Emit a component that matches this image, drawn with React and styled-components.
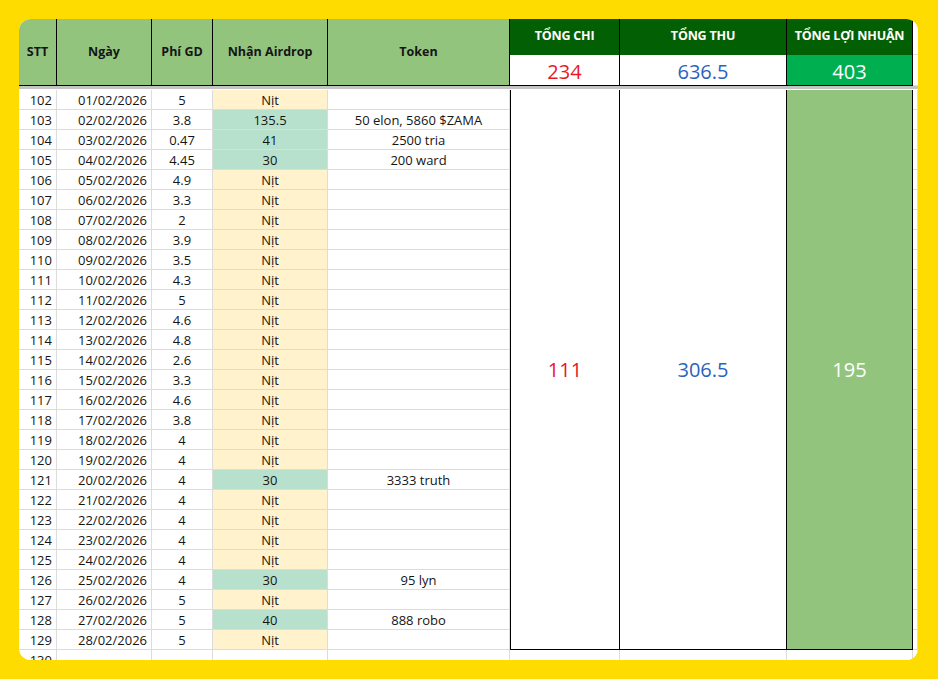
import React from "react";
import styled, { createGlobalStyle, css } from "styled-components";

const GlobalStyle = createGlobalStyle`
  html, body {
    margin: 0;
    padding: 0;
    background: #ffdc00;
  }
  body {
    font-family: "Open Sans", "Liberation Sans", sans-serif;
  }
`;

const Page = styled.div`
  width: 938px;
  height: 679px;
  padding: 19px 20px 19px 19px;
  box-sizing: border-box;
  background: #ffdc00;
`;

const Panel = styled.div`
  height: 641px;
  background: #fff;
  border-radius: 12px;
  overflow: hidden;
`;

const Sheet = styled.div`
  display: grid;
  grid-template-columns: 38px 95px 61px 115px 182px 110px 167px 126px 5px;
  grid-template-rows: 36px 31px 4px repeat(29, 20px);
  font-size: 13px;
  color: #151515;
`;

const HeadCell = styled.div`
  grid-row: span 2;
  display: flex;
  align-items: center;
  justify-content: center;
  padding-bottom: 2px;
  background: #93c47d;
  font-weight: 700;
  font-size: 12.5px;
  border-right: 1px solid #000;
  border-bottom: 1px solid #000;
  box-sizing: border-box;
`;

const TotalHead = styled.div`
  display: flex;
  align-items: center;
  justify-content: center;
  padding-bottom: 4px;
  background: #035f04;
  color: #fff;
  font-weight: 700;
  font-size: 12.5px;
  letter-spacing: -0.2px;
  border-right: 1px solid #000;
  box-sizing: border-box;
`;

const TotalValue = styled.div`
  display: flex;
  align-items: center;
  justify-content: center;
  background: ${(p) => p.$bg || "#fff"};
  color: ${(p) => p.$color};
  font-size: 20px;
  padding-top: 2px;
  border-right: 1px solid #000;
  border-bottom: 1px solid #000;
  box-sizing: border-box;
`;

const Filler = styled.div`
  background: #fff;
  border-bottom: 1px solid #e2e2e2;
  box-sizing: border-box;
`;

const Band = styled.div`
  grid-column: 1 / -1;
  background: #c4c4c4;
  border-bottom: 1px solid #fff;
`;

const Cell = styled.div`
  display: flex;
  align-items: center;
  justify-content: ${(p) => p.$align || "center"};
  padding: 0 ${(p) => (p.$align === "flex-end" ? "4px" : "0")};
  background: ${(p) => p.$bg || "#fff"};
  border-right: 1px solid #dcdcdc;
  border-bottom: 1px solid #dcdcdc;
  box-sizing: border-box;
  white-space: nowrap;
  overflow: hidden;
`;

const Merged = styled.div`
  grid-row: 4 / span 28;
  grid-column: ${(p) => p.$col};
  display: flex;
  align-items: center;
  justify-content: center;
  background: ${(p) => p.$bg || "#fff"};
  color: ${(p) => p.$color};
  font-size: 20px;
  border-right: 1px solid #000;
  border-bottom: 1px solid #000;
  ${(p) => p.$first && css`border-left: 1px solid #000;`}
  box-sizing: border-box;
`;

const NIT = "Nịt";

const rows = [
  [102, "01/02/2026", "5", NIT, ""],
  [103, "02/02/2026", "3.8", "135.5", "50 elon, 5860 $ZAMA"],
  [104, "03/02/2026", "0.47", "41", "2500 tria"],
  [105, "04/02/2026", "4.45", "30", "200 ward"],
  [106, "05/02/2026", "4.9", NIT, ""],
  [107, "06/02/2026", "3.3", NIT, ""],
  [108, "07/02/2026", "2", NIT, ""],
  [109, "08/02/2026", "3.9", NIT, ""],
  [110, "09/02/2026", "3.5", NIT, ""],
  [111, "10/02/2026", "4.3", NIT, ""],
  [112, "11/02/2026", "5", NIT, ""],
  [113, "12/02/2026", "4.6", NIT, ""],
  [114, "13/02/2026", "4.8", NIT, ""],
  [115, "14/02/2026", "2.6", NIT, ""],
  [116, "15/02/2026", "3.3", NIT, ""],
  [117, "16/02/2026", "4.6", NIT, ""],
  [118, "17/02/2026", "3.8", NIT, ""],
  [119, "18/02/2026", "4", NIT, ""],
  [120, "19/02/2026", "4", NIT, ""],
  [121, "20/02/2026", "4", "30", "3333 truth"],
  [122, "21/02/2026", "4", NIT, ""],
  [123, "22/02/2026", "4", NIT, ""],
  [124, "23/02/2026", "4", NIT, ""],
  [125, "24/02/2026", "4", NIT, ""],
  [126, "25/02/2026", "4", "30", "95 lyn"],
  [127, "26/02/2026", "5", NIT, ""],
  [128, "27/02/2026", "5", "40", "888 robo"],
  [129, "28/02/2026", "5", NIT, ""],
];

const App = () => {
  return (
    <>
      <GlobalStyle />
      <Page>
        <Panel>
          <Sheet>
            <HeadCell>STT</HeadCell>
            <HeadCell>Ngày</HeadCell>
            <HeadCell>Phí GD</HeadCell>
            <HeadCell>Nhận Airdrop</HeadCell>
            <HeadCell>Token</HeadCell>
            <TotalHead>TỔNG CHI</TotalHead>
            <TotalHead>TỔNG THU</TotalHead>
            <TotalHead>TỔNG LỢI NHUẬN</TotalHead>
            <Filler />
            <TotalValue $color="#e8191f">234</TotalValue>
            <TotalValue $color="#2a63bd">636.5</TotalValue>
            <TotalValue $bg="#00b050" $color="#fff">
              403
            </TotalValue>
            <Filler />
            <Band />

            <Merged $col={6} $first $color="#e8191f">
              111
            </Merged>
            <Merged $col={7} $color="#2a63bd">
              306.5
            </Merged>
            <Merged $col={8} $bg="#93c47d" $color="#fff">
              195
            </Merged>

            {rows.map(([stt, date, fee, drop, token]) => (
              <React.Fragment key={stt}>
                <Cell $align="flex-end">{stt}</Cell>
                <Cell $align="flex-end">{date}</Cell>
                <Cell>{fee}</Cell>
                <Cell $bg={drop === NIT ? "#fff2cc" : "#b7e1cd"}>{drop}</Cell>
                <Cell>{token}</Cell>
                <Cell />
              </React.Fragment>
            ))}

            <Cell $align="flex-end">130</Cell>
            <Cell />
            <Cell />
            <Cell />
            <Cell />
            <Cell />
            <Cell />
            <Cell />
            <Cell />
          </Sheet>
        </Panel>
      </Page>
    </>
  );
};

export default App;
